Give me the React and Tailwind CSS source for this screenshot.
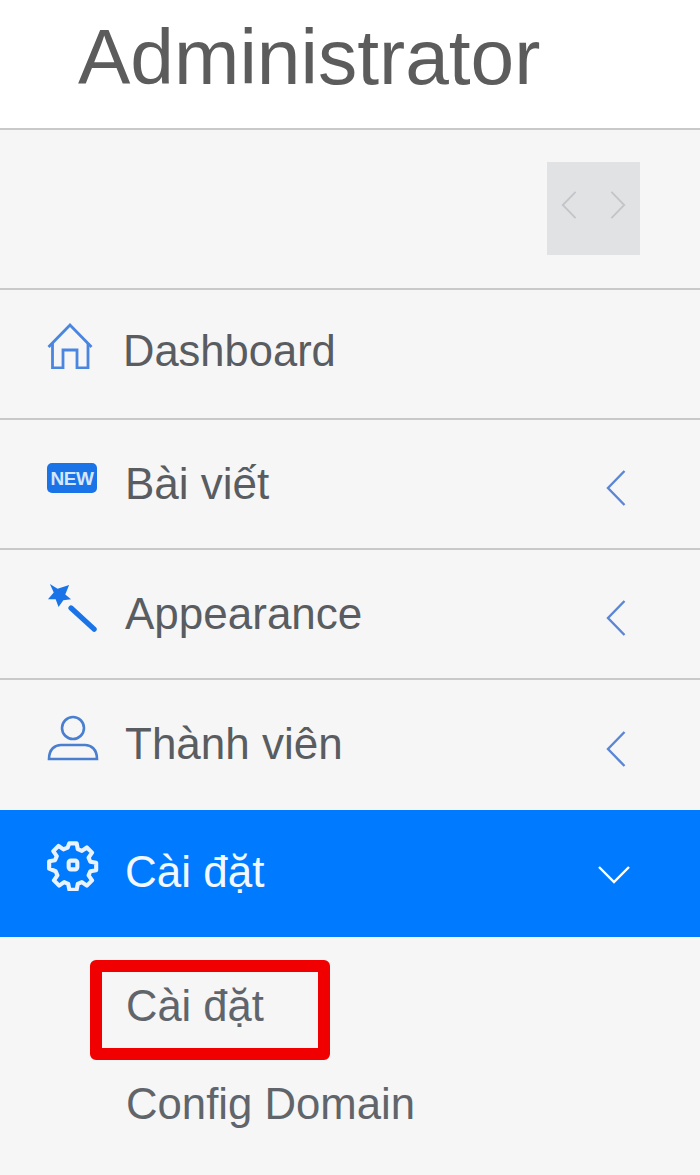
const font = { fontFamily: '"Liberation Sans", Arial, sans-serif' };

function Chevron({ dir = "left", className = "" }) {
  const d = { left: "M18.5 1 L2 18 L18.5 35", right: "M1.5 1 L18 18 L1.5 35", down: "M1 2 L16 17 L31 2" }[dir];
  const box = dir === "down" ? "0 0 32 20" : "0 0 20 36";
  return (
    <svg viewBox={box} className={className} fill="none" stroke="currentColor" strokeWidth="2.4">
      <path d={d} />
    </svg>
  );
}

function HomeIcon() {
  return (
    <svg viewBox="0 0 46 46" className="w-[46px] h-[46px]" fill="none" stroke="#4a86e0" strokeWidth="2.8">
      <path d="M1.5 24 L23 2 L44.5 24" />
      <path d="M5.5 20 V45 H16 V27 H30 V45 H41 V20" />
    </svg>
  );
}

function NewIcon() {
  return (
    <div className="w-[50px] h-[30px] rounded-[5px] bg-[#1a74e8] flex items-center justify-center text-[#d6e6fb] text-[19px] font-bold leading-none tracking-[-0.5px]">
      NEW
    </div>
  );
}

function WandIcon() {
  return (
    <svg viewBox="0 0 52 50" className="w-[52px] h-[50px]" fill="#1a74e8">
      <path d="M3 0 L11 5 L23 1 L19 11 L25 16 L17 17 L12 24 L9 16 L1 16 L7 9 Z" />
      <path d="M25 25 L49 47" stroke="#1a74e8" strokeWidth="5.5" strokeLinecap="round" fill="none" />
    </svg>
  );
}

function UserIcon() {
  return (
    <svg viewBox="0 0 52 46" className="w-[52px] h-[46px]" fill="none" stroke="#4a7fd0" strokeWidth="2.6">
      <circle cx="26" cy="13" r="11" />
      <path d="M2 44 C2 34 8 30 14 30 H38 C44 30 50 34 50 44 Z" />
    </svg>
  );
}

function GearIcon() {
  return (
    <svg viewBox="0 0 24 24" className="w-[52px] h-[52px]" fill="none" stroke="#e8f3ff" strokeWidth="1.9" strokeLinejoin="round">
      <path d="M10.3 2h3.4l.5 2.7 1.9.8 2.3-1.6 2.4 2.4-1.6 2.3.8 1.9 2.7.5v3.4l-2.7.5-.8 1.9 1.6 2.3-2.4 2.4-2.3-1.6-1.9.8-.5 2.7h-3.4l-.5-2.7-1.9-.8-2.3 1.6-2.4-2.4 1.6-2.3-.8-1.9L1 13.7v-3.4l2.7-.5.8-1.9-1.6-2.3 2.4-2.4 2.3 1.6 1.9-.8z" />
      <rect x="10" y="10" width="4" height="4" rx="1" />
    </svg>
  );
}

function Row({ icon, label, chevron, labelClass = "ml-[28px] text-[44px]", iconClass = "-mt-[8px]" }) {
  return (
    <div className="h-[130px] border-b-2 border-[#c9c9c9] flex items-center pl-[47px] pr-[74px]">
      <div className={`w-[50px] flex justify-start ${iconClass}`}>{icon}</div>
      <span className={`leading-none text-[#595c60] whitespace-nowrap ${labelClass}`}>{label}</span>
      {chevron && <Chevron dir="left" className="ml-auto w-[20px] h-[36px] text-[#5b86d6] mt-[7px]" />}
    </div>
  );
}

export default function App() {
  return (
    <div style={font} className="w-[700px] h-[1175px] bg-[#f6f6f6] overflow-hidden">
      <header className="h-[130px] bg-white border-b-2 border-[#c9c9c9] pl-[78px] pt-[17px]">
        <h1 className="text-[78.5px] leading-[80px] font-normal text-[#5c5c5c]">Administrator</h1>
      </header>
      <div className="h-[160px] border-b-2 border-[#c9c9c9] flex justify-end pt-[32px] pr-[60px]">
        <div className="w-[93px] h-[93px] bg-[#e1e2e4] flex items-center justify-between px-[14px] text-[#c3c5c8] pb-[8px]">
          <Chevron dir="left" className="w-[16px] h-[28px]" />
          <Chevron dir="right" className="w-[16px] h-[28px]" />
        </div>
      </div>
      <Row icon={<HomeIcon />} label="Dashboard" labelClass="ml-[26px] text-[43.5px] -mt-[4px]" iconClass="-mt-[16px]" />
      <Row icon={<NewIcon />} label="Bài viết" chevron iconClass="-mt-[12px]" />
      <Row icon={<WandIcon />} label="Appearance" chevron iconClass="-mt-[12px]" />
      <div className="h-[130px] flex items-center pl-[47px] pr-[74px]">
        <div className="w-[50px] -mt-[14px]"><UserIcon /></div>
        <span className="text-[44px] leading-none text-[#595c60] whitespace-nowrap ml-[28px] -mt-[2px]">Thành viên</span>
        <Chevron dir="left" className="ml-auto w-[20px] h-[36px] text-[#5b86d6] mt-[7px]" />
      </div>
      <div className="h-[127px] bg-[#007bff] flex items-center pl-[47px] pr-[70px]">
        <div className="w-[50px] -mt-[18px]"><GearIcon /></div>
        <span className="text-[44px] leading-none text-[#f2f8ff] whitespace-nowrap ml-[28px] -mt-[4px]">Cài đặt</span>
        <Chevron dir="down" className="ml-auto w-[32px] h-[20px] text-white mt-[2px]" />
      </div>
      <div className="pt-[23px] pl-[90px]">
        <div className="w-[240px] h-[100px] border-[12px] border-[#f00000] rounded-[6px] flex items-center pl-[24px]">
          <span className="text-[43.5px] leading-none text-[#60656b] whitespace-nowrap -mt-[6px]">Cài đặt</span>
        </div>
        <div className="mt-[22px] pl-[36px] text-[43.7px] leading-none text-[#60656b] whitespace-nowrap">Config Domain</div>
      </div>
    </div>
  );
}
